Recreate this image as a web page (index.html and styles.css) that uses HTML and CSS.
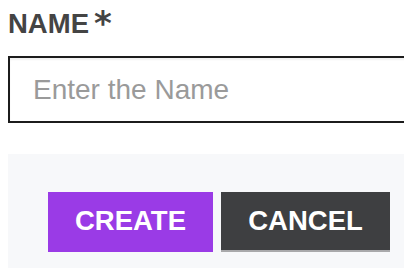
FILE: index.html
```html
<!DOCTYPE html>
<html lang="en">
<head>
<meta charset="utf-8">
<title>Name form</title>
<link rel="stylesheet" href="styles.css">
</head>
<body>
<form class="form">
  <label class="label" for="name">NAME<span class="req">*</span></label>
  <input class="input" id="name" type="text" placeholder="Enter the Name">
  <div class="actions">
    <button type="button" class="btn btn-create">CREATE</button>
    <button type="button" class="btn btn-cancel">CANCEL</button>
  </div>
</form>
</body>
</html>
```
FILE: styles.css
```css
html {
  overflow: hidden;
}
body {
  margin: 8px 0 0 8px;
  background: #ffffff;
  font-family: "Liberation Sans", Arial, sans-serif;
}
.form {
  display: flex;
  flex-direction: column;
  margin-right: -30px;
}
.label {
  display: flex;
  align-items: flex-start;
  height: 31px;
  font-size: 27.5px;
  line-height: 31px;
  font-weight: 700;
  color: #444444;
}
.req {
  font-family: "DejaVu Sans", sans-serif;
  font-weight: 700;
  font-size: 34px;
  line-height: 31px;
  height: 31px;
  margin-left: 5px;
  margin-top: 0;
  color: #444444;
}
.input {
  margin-top: 17px;
  box-sizing: border-box;
  height: 67px;
  width: 100%;
  border: 2px solid #1c1c1c;
  border-radius: 0;
  padding: 0 23px;
  font-family: "Liberation Sans", Arial, sans-serif;
  font-size: 28px;
  color: #222;
  background: #fff;
  box-shadow: inset 0 2px 2px rgba(0, 0, 0, 0.06);
  outline: none;
}
.input::placeholder {
  color: #9a9a9a;
}
.actions {
  margin-top: 31px;
  background: #f7f8fa;
  padding: 38px 40px 40px;
  display: flex;
  gap: 8px;
}
.btn {
  box-sizing: border-box;
  height: 60px;
  padding: 0;
  border: 0;
  border-radius: 0;
  font-family: "Liberation Sans", Arial, sans-serif;
  font-weight: 700;
  font-size: 27.5px;
  line-height: 58px;
  text-align: center;
  color: #ffffff;
  cursor: pointer;
}
.btn-create {
  width: 165px;
  background: #9a3be6;
  border-bottom: 2px solid #9a3be6;
}
.btn-cancel {
  width: 169px;
  background: #3e3f41;
  border-bottom: 2px solid #a9a9ab;
}
```
